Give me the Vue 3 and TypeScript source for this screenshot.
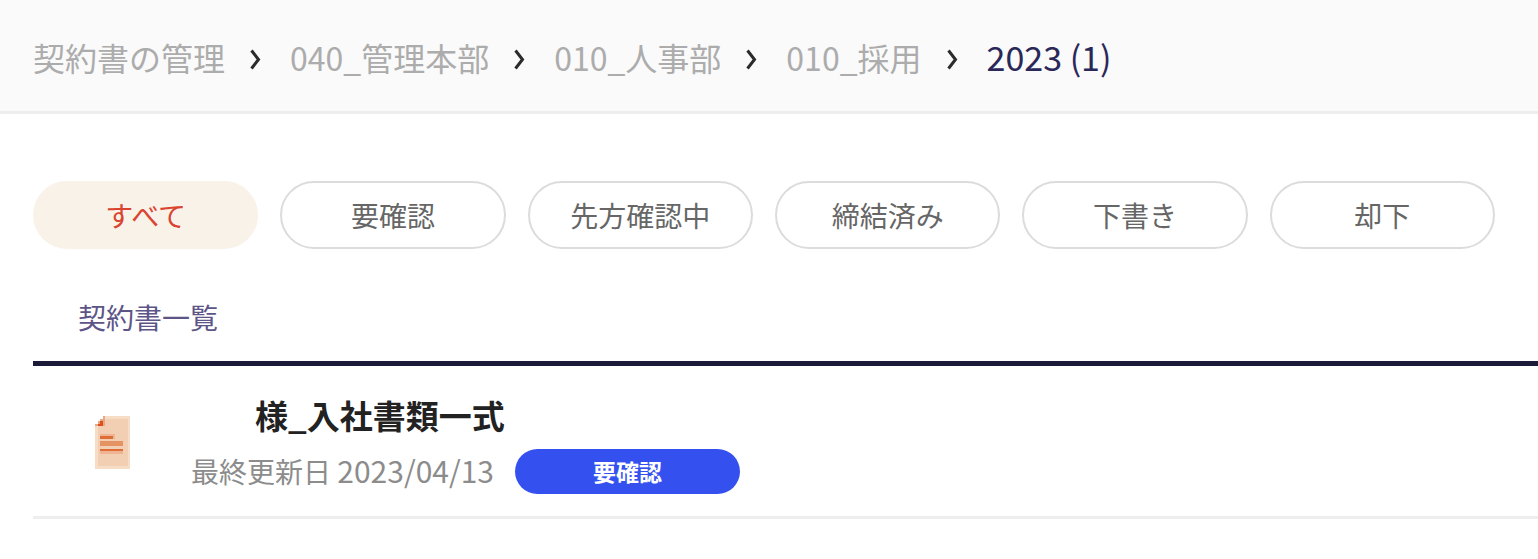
<script setup lang="ts">
import { ref } from 'vue'

interface Contract {
  id: number
  title: string
  updated: string
  status: string
}

const crumbs: string[] = ['契約書の管理', '040_管理本部', '010_人事部', '010_採用']
const current = '2023 (1)'

const filters: string[] = ['すべて', '要確認', '先方確認中', '締結済み', '下書き', '却下']
const active = ref<string>('すべて')

const contracts: Contract[] = [
  { id: 1, title: '様_入社書類一式', updated: '2023/04/13', status: '要確認' },
]
</script>

<template>
  <div class="page">
    <header class="header">
      <nav class="crumbs" aria-label="パンくずリスト">
        <template v-for="crumb in crumbs" :key="crumb">
          <a class="crumb" href="#">{{ crumb }}</a>
          <svg class="chevron" viewBox="0 0 11 21" aria-hidden="true">
            <path d="M1.5 1.5 L8.5 10.5 L1.5 19.5" />
          </svg>
        </template>
        <span class="crumb current" aria-current="page">{{ current }}</span>
      </nav>
    </header>

    <main class="main">
      <div class="filters">
        <button
          v-for="filter in filters"
          :key="filter"
          type="button"
          class="filter"
          :class="{ active: filter === active }"
          :aria-pressed="filter === active"
          @click="active = filter"
        >
          {{ filter }}
        </button>
      </div>

      <section class="list">
        <h2 class="list-title">契約書一覧</h2>
        <article v-for="contract in contracts" :key="contract.id" class="row">
          <svg class="doc" viewBox="0 0 35 53" aria-hidden="true">
            <path class="doc-edge" d="M8 0 H35 V53 H0 V8 H8 Z" />
            <path class="doc-page" d="M10 3 H33 V50 H3 V10 H10 Z" />
            <path class="doc-fold-soft" d="M8 0 H10 V10 H0 V8 H3 V5 H5 V3 H8 Z" />
            <path class="doc-fold" d="M5 5 H8 V10 H3 V8 H5 Z" />
            <path class="line-pale" d="M5 18 H20 V23 H5 Z M5 35 H28 V38 H5 Z" />
            <path class="line-mid" d="M5 25 H28 V30 H5 Z" />
            <path class="line-dark" d="M5 20 H18 V23 H5 Z M5 33 H28 V35 H5 Z" />
          </svg>
          <div class="info">
            <h3 class="title">{{ contract.title }}</h3>
            <div class="meta">
              <span class="date">最終更新日 <time class="day">{{ contract.updated }}</time></span>
              <span class="badge">{{ contract.status }}</span>
            </div>
          </div>
        </article>
      </section>
    </main>
  </div>
</template>

<style>
body {
  margin: 0;
  background: #ffffff;
}
</style>

<style scoped>
.page {
  font-family: "Noto Sans CJK JP", sans-serif;
  color: #222222;
}

.header {
  padding: 33px 33px 26px;
  background: #fafafa;
  border-bottom: 3px solid #eeeeee;
}

.crumbs {
  display: flex;
  align-items: center;
  white-space: nowrap;
}

.crumb {
  padding-bottom: 4px;
  color: #acacac;
  font-size: 32px;
  line-height: 48px;
  text-decoration: none;
}

.current {
  color: #2a2859;
  font-size: 34px;
}

.chevron {
  flex: none;
  width: 11px;
  height: 21px;
  margin: 0 29px 0 25px;
  fill: none;
  stroke: #2b2b2b;
  stroke-width: 3;
}

.main {
  padding: 67px 0 40px 33px;
}

.filters {
  display: grid;
  grid-template-columns: repeat(6, 1fr);
  gap: 22px;
  padding-right: 43px;
}

.filter {
  height: 68px;
  padding: 0;
  border: 2px solid #dcdcdc;
  border-radius: 34px;
  background: #ffffff;
  color: #666666;
  font-family: inherit;
  font-size: 28px;
  line-height: 40px;
  white-space: nowrap;
  cursor: pointer;
}

.filter.active {
  border-color: #f9f2e9;
  background: #f9f2e9;
  color: #d9432f;
}

.list-title {
  margin: 0;
  padding: 48px 45px 24px;
  border-bottom: 5px solid #1b1a38;
  color: #5d5587;
  font-size: 28px;
  font-weight: 400;
  line-height: 40px;
}

.row {
  display: flex;
  align-items: center;
  gap: 61px;
  padding: 25px 0 22px 62px;
  border-bottom: 3px solid #eeeeee;
}

.doc {
  flex: none;
  width: 35px;
  height: 53px;
}

.doc-edge { fill: #f7dcc6; }
.doc-page { fill: #f2cfb2; }
.doc-fold-soft { fill: #e9a78a; }
.doc-fold { fill: #dd5114; }
.line-pale { fill: #efb592; }
.line-mid { fill: #e69363; }
.line-dark { fill: #de6d38; }

.title {
  margin: 0;
  padding-left: 64px;
  font-size: 33px;
  font-weight: 700;
  line-height: 48px;
}

.meta {
  display: flex;
  align-items: center;
  gap: 21px;
  padding-top: 10px;
}

.date {
  color: #8c8c8c;
  font-size: 28px;
  line-height: 45px;
}

.day {
  font-size: 30px;
  line-height: 1;
}

.badge {
  width: 225px;
  border-radius: 23px;
  background: #3451f0;
  color: #ffffff;
  font-size: 23px;
  font-weight: 700;
  line-height: 45px;
  text-align: center;
}
</style>
